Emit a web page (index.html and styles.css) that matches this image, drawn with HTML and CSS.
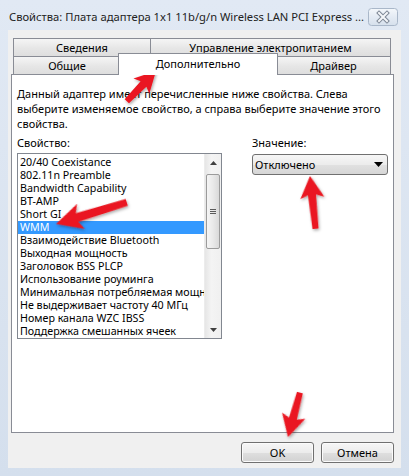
FILE: index.html
```html
<!DOCTYPE html>
<html lang="ru">
<head>
<meta charset="utf-8">
<title>Свойства</title>
<link rel="stylesheet" href="styles.css">
</head>
<body>
<div class="window">
  <div class="titlebar">
    <span class="title">Свойства: Плата адаптера 1x1 11b/g/n Wireless LAN PCI Express ...</span>
    <div class="close">
      <svg width="30" height="18" viewBox="0 0 30 18">
        <defs>
          <linearGradient id="cg" x1="0" y1="0" x2="0" y2="1">
            <stop offset="0" stop-color="#f4f7fb"/>
            <stop offset="0.5" stop-color="#e4ebf4"/>
            <stop offset="1" stop-color="#d6e0ec"/>
          </linearGradient>
        </defs>
        <rect x="0.5" y="0.5" width="29" height="17" rx="3" fill="url(#cg)" stroke="#a9b7c9"/>
        <path d="M11 5 L19 13 M19 5 L11 13" stroke="#7d8795" stroke-width="4" stroke-linecap="square"/>
        <path d="M11 5 L19 13 M19 5 L11 13" stroke="#f4f6f9" stroke-width="2" stroke-linecap="square"/>
      </svg>
    </div>
  </div>
  <div class="dialog">
    <div class="tabrow">
      <div class="tab tab-info">Сведения</div>
      <div class="tab tab-power">Управление электропитанием</div>
    </div>
    <div class="tabrow">
      <div class="tab tab-general">Общие</div>
      <div class="tab tab-active">Дополнительно</div>
      <div class="tab tab-driver">Драйвер</div>
    </div>
    <div class="panel">
      <p class="desc">Данный адаптер имеет перечисленные ниже свойства. Слева<br>выберите изменяемое свойство, а справа выберите значение этого<br>свойства.</p>
      <div class="cols">
        <div class="col-left">
          <div class="label label-left">Свойство:</div>
          <div class="listbox">
            <div class="items">
              <div class="item">20/40 Coexistance</div>
              <div class="item">802.11n Preamble</div>
              <div class="item">Bandwidth Capability</div>
              <div class="item">BT-AMP</div>
              <div class="item">Short GI</div>
              <div class="item sel">WMM</div>
              <div class="item">Взаимодействие Bluetooth</div>
              <div class="item">Выходная мощность</div>
              <div class="item">Заголовок BSS PLCP</div>
              <div class="item">Использование роуминга</div>
              <div class="item">Минимальная потребляемая мощность</div>
              <div class="item">Не выдерживает частоту 40 МГц</div>
              <div class="item">Номер канала WZC IBSS</div>
              <div class="item">Поддержка смешанных ячеек</div>
            </div>
            <div class="scrollbar">
              <div class="sb-btn">
                <svg width="7" height="4" viewBox="0 0 7 4"><path d="M0 4 L3.5 0 L7 4 Z" fill="#404040"/></svg>
              </div>
              <div class="sb-thumb"><span class="grip"></span></div>
              <div class="sb-space"></div>
              <div class="sb-btn">
                <svg width="7" height="4" viewBox="0 0 7 4"><path d="M0 0 L3.5 4 L7 0 Z" fill="#404040"/></svg>
              </div>
            </div>
          </div>
        </div>
        <div class="col-right">
          <div class="label label-right">Значение:</div>
          <div class="select">
            <span class="select-text">Отключено</span>
            <svg class="select-arrow" width="9" height="5" viewBox="0 0 9 5"><path d="M0 0 L9 0 L4.5 5 Z" fill="#000"/></svg>
          </div>
        </div>
      </div>
    </div>
    <div class="buttons">
      <button class="btn">OK</button>
      <button class="btn">Отмена</button>
    </div>
  </div>
  <svg class="arrows" width="409" height="476" viewBox="0 0 409 476">
    <defs>
      <filter id="sh" x="-30%" y="-30%" width="160%" height="160%">
        <feDropShadow dx="1" dy="1.5" stdDeviation="1.5" flood-color="#000" flood-opacity="0.35"/>
      </filter>
    </defs>
    <g fill="#ea1720" filter="url(#sh)">
      <polygon transform="translate(156 71) rotate(-46)" points="0,0 -21,-11 -18,-4 -42,-3 -42,3 -18,4 -21,11"/>
      <polygon transform="translate(56 224) rotate(163)" points="0,0 -26,-13 -22,-4.5 -74,-3.5 -74,3.5 -22,4.5 -26,13"/>
      <polygon transform="translate(310 176) rotate(-96)" points="0,0 -22,-12 -19,-4 -53,-3 -53,3 -19,4 -22,12"/>
      <polygon transform="translate(288 437) rotate(105)" points="0,0 -22,-12 -19,-4 -46,-3 -46,3 -19,4 -22,12"/>
    </g>
  </svg>
</div>
</body>
</html>
```

FILE: styles.css
```css
body {
  margin: 0;
}

.window {
  position: relative;
  width: 409px;
  height: 476px;
  overflow: hidden;
  background: linear-gradient(#e1e9f4, #d4dfed);
  font-family: "Noto Sans", "Liberation Sans", sans-serif;
  font-size: 11px;
  color: #000;
}

.titlebar {
  height: 30px;
  display: flex;
  align-items: flex-start;
}

.title {
  padding: 9px 0 0 9px;
  line-height: 16px;
  font-size: 11.2px;
  white-space: nowrap;
  color: #222;
}

.close {
  margin: 8px 11px 0 auto;
  width: 30px;
  height: 18px;
}

.close svg {
  display: block;
}

.dialog {
  margin: 0 8px;
  height: 438px;
  box-sizing: border-box;
  padding-top: 8px;
  background: #f0f0f0;
  display: flex;
  flex-direction: column;
}

.tabrow {
  display: flex;
  align-items: flex-start;
  height: 18px;
  margin-left: 5px;
}

.tab {
  box-sizing: border-box;
  height: 18px;
  border: 1px solid #898c95;
  border-bottom: none;
  background: linear-gradient(#f5f5f5, #e6e6e6 55%, #dedede);
  text-align: center;
  line-height: 17px;
  white-space: nowrap;
}

.tab-info {
  width: 138px;
}

.tab-power {
  width: 241px;
  margin-left: -1px;
}

.tab-general {
  width: 108px;
}

.tab-active {
  position: relative;
  z-index: 2;
  width: 160px;
  height: 22px;
  margin: -3px 0 0 -3px;
  padding-top: 1px;
  background: #fff;
}

.tab-driver {
  width: 115px;
  margin-left: -2px;
}

.panel {
  margin-left: 3px;
  width: 383px;
  height: 359px;
  box-sizing: border-box;
  border: 1px solid #898c95;
  background: #fff;
  padding: 11px 5px 0;
}

.desc {
  margin: 0;
  line-height: 15px;
  white-space: nowrap;
}

.cols {
  display: flex;
  margin-top: 4px;
}

.col-left {
  width: 205px;
}

.col-right {
  width: 136px;
  margin-left: 30px;
}

.label {
  line-height: 15px;
}

.label-left {
  margin-bottom: 3px;
}

.label-right {
  margin-bottom: 4px;
}

.listbox {
  height: 186px;
  box-sizing: border-box;
  border: 1px solid #828790;
  display: flex;
  background: #fff;
}

.items {
  flex: 1;
  min-width: 0;
  padding-top: 2px;
  overflow: hidden;
  font-size: 10.7px;
}

.item {
  height: 13px;
  line-height: 13px;
  padding-left: 2px;
  white-space: nowrap;
  overflow: hidden;
}

.item.sel {
  background: #3399ff;
  color: #fff;
}

.scrollbar {
  width: 17px;
  display: flex;
  flex-direction: column;
  background: linear-gradient(to right, #e6e6e6, #f4f4f4 40%, #f0f0f0);
  border-left: 1px solid #ececec;
  box-sizing: border-box;
}

.sb-btn {
  height: 17px;
  display: flex;
  align-items: center;
  justify-content: center;
}

.sb-btn svg {
  display: block;
}

.sb-thumb {
  margin: 3px 1px 0;
  height: 75px;
  box-sizing: border-box;
  border: 1px solid #9b9b9b;
  border-radius: 2px;
  background: linear-gradient(to right, #f5f5f5, #e9e9e9 50%, #d9d9d9);
  display: flex;
  align-items: center;
  justify-content: center;
}

.grip {
  width: 6px;
  height: 5px;
  background: repeating-linear-gradient(#5a5a5a 0 1px, transparent 1px 2px);
}

.sb-space {
  flex: 1;
}

.select {
  height: 21px;
  box-sizing: border-box;
  border: 1px solid #707070;
  border-radius: 3px;
  background: linear-gradient(#f6f6f6, #ececec 50%, #e1e1e1 50%, #d6d6d6);
  display: flex;
  align-items: center;
  padding-left: 2px;
}

.select-arrow {
  margin-left: auto;
  margin-right: 4px;
}

.buttons {
  display: flex;
  justify-content: flex-end;
  gap: 7px;
  margin-top: 9px;
  padding-right: 7px;
}

.btn {
  width: 73px;
  height: 21px;
  box-sizing: border-box;
  border: 1px solid #707070;
  border-radius: 3px;
  background: linear-gradient(#f6f6f6, #ececec 50%, #dfdfdf 50%, #d2d2d2);
  box-shadow: inset 0 0 0 1px #fbfbfb;
  font-family: "Noto Sans", "Liberation Sans", sans-serif;
  font-size: 11px;
  font-weight: 400;
  color: #000;
  padding: 0;
}

.arrows {
  position: absolute;
  left: 0;
  top: 0;
  pointer-events: none;
}
```
